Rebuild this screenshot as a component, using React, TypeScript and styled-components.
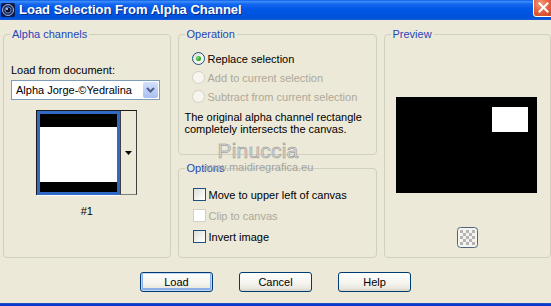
import React from "react";
import styled, { createGlobalStyle } from "styled-components";

const Global = createGlobalStyle`
  html, body { margin: 0; padding: 0; }
  body {
    width: 551px; height: 306px; overflow: hidden;
    background: #ECE9D8;
    font-family: "Liberation Sans", Arial, sans-serif;
    font-size: 11px; color: #000;
  }
  #root { width: 551px; height: 306px; }
`;

const Window = styled.div`
  position: relative;
  width: 551px; height: 306px;
  display: flex; flex-direction: column;
  background: #ECE9D8;
  overflow: hidden;
`;

const TitleBar = styled.div`
  flex: none;
  height: 20px;
  display: flex; align-items: center;
  padding-left: 1px;
  background: linear-gradient(180deg, #0A5EE8 0%, #3C8CF8 8%, #1567F0 20%, #0058E6 45%, #0054E0 70%, #0050D8 90%, #1A5EDB 100%);
`;

const AppIcon = styled.svg`
  flex: none; width: 14px; height: 14px;
`;

const Title = styled.div`
  flex: 1;
  margin-left: 4px;
  color: #fff;
  font-weight: bold;
  font-size: 13px;
  line-height: 20px;
  white-space: nowrap;
  text-shadow: 1px 1px 0 #0B2C8A;
`;

const CloseBtn = styled.div`
  flex: none;
  align-self: flex-start;
  width: 21px; height: 21px;
  margin-top: -4px; margin-right: -3px;
  box-sizing: border-box;
  border: 1px solid #fff;
  border-radius: 3px;
  background: radial-gradient(circle at 35% 35%, #F29B7E 0%, #E5623F 45%, #C8411F 100%);
  display: flex; align-items: flex-end; justify-content: center;
  padding-bottom: 3px;
`;

const Main = styled.div`
  flex: none;
  height: 230px;
  display: flex;
  gap: 7px;
  padding: 8px 0 0 3px;
`;

const Group = styled.fieldset<{ $w: number; $h?: number }>`
  margin: 0; padding: 0; min-width: 0;
  box-sizing: border-box;
  width: ${p => p.$w}px;
  ${p => (p.$h ? `height: ${p.$h}px; flex: none;` : "flex: 1;")}
  border: 1px solid #D0D0BF;
  border-radius: 4px;
  display: flex; flex-direction: column;
`;

const Legend = styled.legend`
  margin-left: 6px;
  padding: 0 2px;
  color: #1E46B8;
  font-size: 11px;
  line-height: 13px;
`;

const Column = styled.div`
  display: flex; flex-direction: column;
  gap: 7px;
`;

/* Left group */
const LeftBody = styled.div`
  display: flex; flex-direction: column;
  padding: 23px 0 0 7px;
`;

const FieldLabel = styled.div`
  line-height: 13px;
`;

const Select = styled.div`
  margin-top: 3px;
  width: 149px; height: 20px;
  box-sizing: border-box;
  border: 1px solid #7F9DB9;
  background: #fff;
  display: flex; align-items: center;
  padding: 0 1px 0 4px;
`;

const SelectText = styled.span`
  flex: 1;
  line-height: 16px;
  white-space: nowrap;
`;

const SelectButton = styled.div`
  width: 15px; height: 16px;
  border-radius: 2px;
  background: linear-gradient(180deg, #D4E0FD 0%, #B9CDF7 60%, #A9BFEF 100%);
  display: flex; align-items: center; justify-content: center;
`;

const ThumbFrame = styled.div`
  margin: 10px 0 0 25px;
  align-self: flex-start;
  display: flex;
  border-top: 1px solid #1a1a1a;
  border-left: 1px solid #1a1a1a;
`;

const Thumb = styled.div`
  width: 83px; height: 84px;
  box-sizing: border-box;
  border: 3px solid #3169C6;
  display: flex; flex-direction: column;
  background: #fff;
  box-shadow: 0 1px 0 #fff;
`;

const Band = styled.div<{ $h: number; $c: string }>`
  flex: ${p => (p.$h ? "none" : "1")};
  height: ${p => p.$h}px;
  background: ${p => p.$c};
`;

const DropPart = styled.div`
  width: 17px;
  box-sizing: border-box;
  border-left: 1px solid #404040;
  border-right: 1px solid #404040;
  border-bottom: 1px solid #808080;
  background: #ECE9D8;
  display: flex; align-items: center; justify-content: center;
`;

const Caption = styled.div`
  margin-top: 10px;
  margin-left: -7px;
  text-align: center;
  line-height: 13px;
`;

/* Operation / options */
const OpBody = styled.div`
  display: flex; flex-direction: column;
  padding-top: 8px;
`;

const OptionRow = styled.div<{ $h: number; $pad: number; $disabled?: boolean }>`
  height: ${p => p.$h}px;
  display: flex; align-items: center;
  gap: 3px;
  padding-left: ${p => p.$pad}px;
  color: ${p => (p.$disabled ? "#ACA899" : "#000")};
  white-space: nowrap;
`;

const Radio = styled.span<{ $checked?: boolean; $disabled?: boolean }>`
  flex: none;
  width: 13px; height: 13px;
  box-sizing: border-box;
  border-radius: 50%;
  border: 1px solid ${p => (p.$disabled ? "#D3D1C4" : "#1C5180")};
  background: ${p => (p.$disabled ? "#F6F5EF" : "linear-gradient(135deg, #DCDCD7 0%, #F4F4F0 60%, #FFFFFF 100%)")};
  display: flex; align-items: center; justify-content: center;
  &::after {
    content: "";
    display: ${p => (p.$checked ? "block" : "none")};
    width: 5px; height: 5px;
    border-radius: 50%;
    background: radial-gradient(circle at 35% 35%, #7BE07B 0%, #2BAE2B 55%, #1A8A1A 100%);
  }
`;

const Check = styled.span<{ $disabled?: boolean }>`
  flex: none;
  width: 13px; height: 13px;
  box-sizing: border-box;
  border: 1px solid ${p => (p.$disabled ? "#D3D1C4" : "#1C5180")};
  background: ${p => (p.$disabled ? "#FFFFFF" : "linear-gradient(135deg, #DCDCD7 0%, #F4F4F0 60%, #FFFFFF 100%)")};
`;

const Desc = styled.div`
  margin-top: 5px;
  padding-left: 6px;
  line-height: 12px;
`;

const OptBody = styled.div`
  display: flex; flex-direction: column;
  padding-top: 9px;
`;

/* Preview */
const PreviewBody = styled.div`
  display: flex; flex-direction: column; align-items: center;
  padding-top: 56px;
`;

const PreviewPic = styled.svg`
  display: block;
  width: 141px; height: 96px;
  margin-left: -2px;
`;

const CheckerBtn = styled.svg`
  display: block;
  margin-top: 34px;
  width: 21px; height: 21px;
`;

/* Buttons */
const ButtonRow = styled.div`
  flex: none;
  margin-top: 14px;
  display: flex; justify-content: center;
  gap: 26px;
`;

const Button = styled.button<{ $default?: boolean }>`
  width: 73px; height: 20px;
  box-sizing: border-box;
  padding: 0;
  font-family: "Liberation Sans", Arial, sans-serif;
  font-size: 11px;
  color: #000;
  border: 1px solid #003C74;
  border-radius: 3px;
  background: linear-gradient(180deg, #FFFFFF 0%, #F5F4EF 55%, #E9E7DE 85%, #D8D3C6 100%);
  box-shadow: ${p => (p.$default ? "inset 0 0 0 1px #C4D6F4, inset 0 -1px 0 2px #8CAEE6" : "none")};
`;

const BottomFrame = styled.div`
  flex: none;
  margin-top: auto;
  height: 3px;
  background: linear-gradient(180deg, #2A5CC0 0%, #0A3CC8 50%, #0831D9 100%);
`;

/* Watermark overlay */
const Watermark = styled.div`
  position: absolute;
  left: 178px; top: 140px;
  width: 160px;
  text-align: center;
  pointer-events: none;
`;

const WmName = styled.div`
  font-size: 21px;
  line-height: 21px;
  color: #D6D6D6;
  -webkit-text-stroke: 0.5px #8E8E8E;
  letter-spacing: 0.2px;
`;

const WmSite = styled.div`
  font-size: 11px;
  line-height: 13px;
  color: #A2A2A2;
`;

export default function App() {
  return (
    <>
      <Global />
      <Window>
        <TitleBar>
          <AppIcon viewBox="0 0 14 14">
            <rect x="0" y="0" width="14" height="14" rx="2" fill="#0E1B4A" />
            <circle cx="7" cy="7" r="5.5" fill="#20305E" stroke="#9FB4D8" strokeWidth="1" />
            <circle cx="7" cy="7" r="3" fill="#0A0F2A" stroke="#5C7FC4" strokeWidth="1" />
            <circle cx="6" cy="6" r="1" fill="#D8E4FF" />
          </AppIcon>
          <Title>Load Selection From Alpha Channel</Title>
          <CloseBtn>
            <svg width="11" height="11" viewBox="0 0 11 11">
              <path d="M1.5 1.5 L9.5 9.5 M9.5 1.5 L1.5 9.5" stroke="#fff" strokeWidth="2" strokeLinecap="square" />
            </svg>
          </CloseBtn>
        </TitleBar>

        <Main>
          <Group $w={166}>
            <Legend>Alpha channels</Legend>
            <LeftBody>
              <FieldLabel>Load from document:</FieldLabel>
              <Select>
                <SelectText>Alpha Jorge-©Yedralina</SelectText>
                <SelectButton>
                  <svg width="9" height="6" viewBox="0 0 9 6">
                    <path d="M1 1 L4.5 4.5 L8 1" stroke="#4D6185" strokeWidth="2" fill="none" />
                  </svg>
                </SelectButton>
              </Select>
              <ThumbFrame>
                <Thumb>
                  <Band $h={13} $c="#000" />
                  <Band $h={0} $c="#fff" />
                  <Band $h={10} $c="#000" />
                </Thumb>
                <DropPart>
                  <svg width="7" height="4" viewBox="0 0 7 4">
                    <path d="M0 0 H7 L3.5 4 Z" fill="#000" />
                  </svg>
                </DropPart>
              </ThumbFrame>
              <Caption>#1</Caption>
            </LeftBody>
          </Group>

          <Column>
            <Group $w={199} $h={127}>
              <Legend>Operation</Legend>
              <OpBody>
                <OptionRow $h={19} $pad={13}>
                  <Radio $checked />
                  <span>Replace selection</span>
                </OptionRow>
                <OptionRow $h={19} $pad={13} $disabled>
                  <Radio $disabled />
                  <span>Add to current selection</span>
                </OptionRow>
                <OptionRow $h={19} $pad={13} $disabled>
                  <Radio $disabled />
                  <span>Subtract from current selection</span>
                </OptionRow>
                <Desc>
                  The original alpha channel rectangle
                  <br />
                  completely intersects the canvas.
                </Desc>
              </OpBody>
            </Group>
            <Group $w={199}>
              <Legend>Options</Legend>
              <OptBody>
                <OptionRow $h={21} $pad={14}>
                  <Check />
                  <span>Move to upper left of canvas</span>
                </OptionRow>
                <OptionRow $h={21} $pad={14} $disabled>
                  <Check $disabled />
                  <span>Clip to canvas</span>
                </OptionRow>
                <OptionRow $h={21} $pad={14}>
                  <Check />
                  <span>Invert image</span>
                </OptionRow>
              </OptBody>
            </Group>
          </Column>

          <Group $w={168}>
            <Legend>Preview</Legend>
            <PreviewBody>
              <PreviewPic viewBox="0 0 141 96">
                <rect x="0" y="0" width="141" height="96" fill="#000" />
                <rect x="96" y="10" width="36" height="25" fill="#fff" />
              </PreviewPic>
              <CheckerBtn viewBox="0 0 21 21">
                <rect x="0.5" y="0.5" width="20" height="20" rx="3" fill="#F4F3EE" stroke="#4F6580" />
                <g fill="#B4B4B4">
                  <rect x="3" y="3" width="3" height="3" />
                  <rect x="9" y="3" width="3" height="3" />
                  <rect x="15" y="3" width="3" height="3" />
                  <rect x="6" y="6" width="3" height="3" />
                  <rect x="12" y="6" width="3" height="3" />
                  <rect x="3" y="9" width="3" height="3" />
                  <rect x="9" y="9" width="3" height="3" />
                  <rect x="15" y="9" width="3" height="3" />
                  <rect x="6" y="12" width="3" height="3" />
                  <rect x="12" y="12" width="3" height="3" />
                  <rect x="3" y="15" width="3" height="3" />
                  <rect x="9" y="15" width="3" height="3" />
                  <rect x="15" y="15" width="3" height="3" />
                </g>
              </CheckerBtn>
            </PreviewBody>
          </Group>
        </Main>

        <ButtonRow>
          <Button $default>Load</Button>
          <Button>Cancel</Button>
          <Button>Help</Button>
        </ButtonRow>

        <BottomFrame />

        <Watermark>
          <WmName>Pinuccia</WmName>
          <WmSite>www.maidiregrafica.eu</WmSite>
        </Watermark>
      </Window>
    </>
  );
}
